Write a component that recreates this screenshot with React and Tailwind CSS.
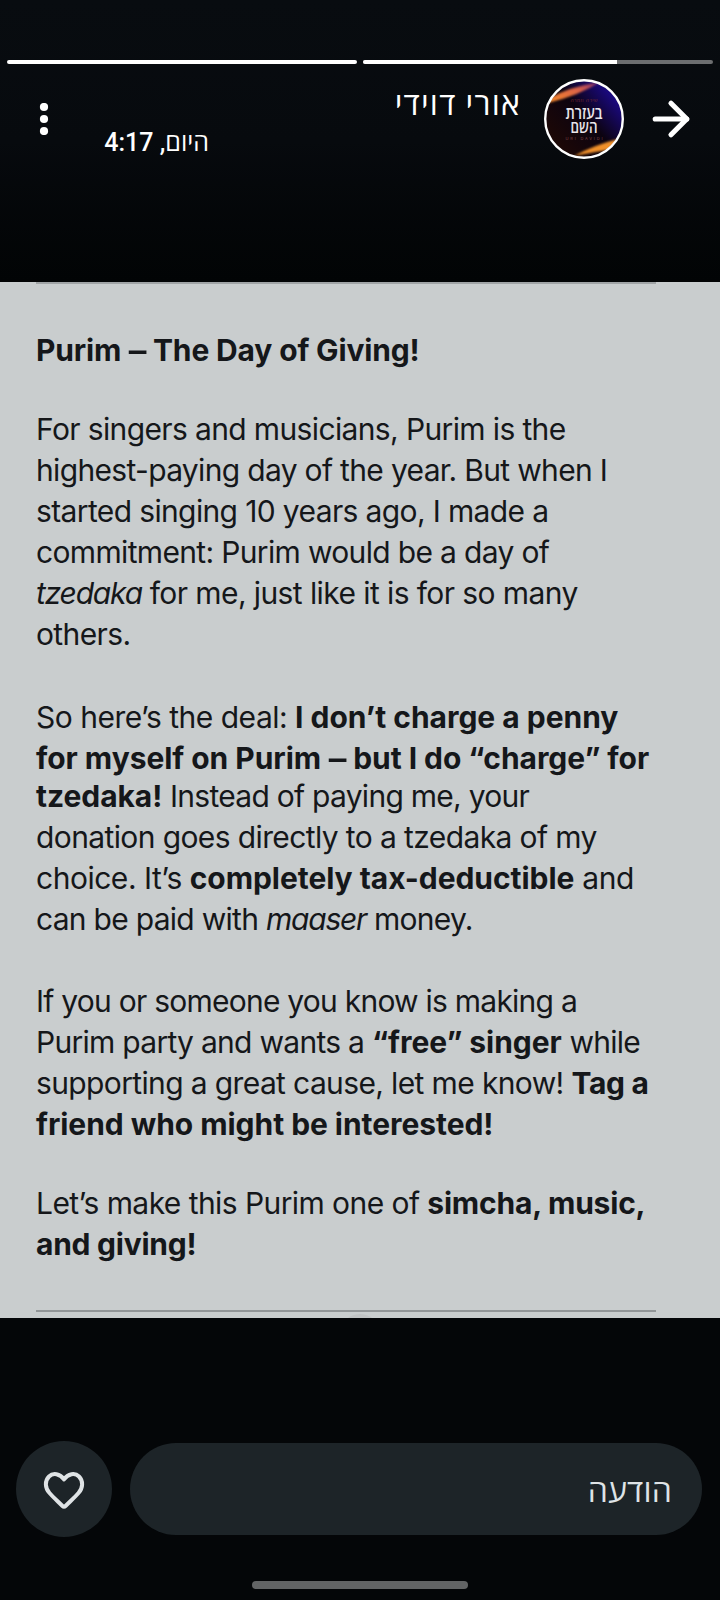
import { ArrowRight } from 'lucide-react'

const B = ({ children, className = 'tracking-[-0.05px]' }) => (
  <strong className={`font-bold ${className}`}>{children}</strong>
)

const Em = ({ children }) => <em className="tracking-[-1.2px]">{children}</em>

const Dash = () => <span className="mx-[1.5px] inline-block scale-x-[1.18]">–</span>

function Line({ className = '', children }) {
  return <span className={`block h-[41px] whitespace-nowrap ${className}`}>{children}</span>
}

function Progress() {
  return (
    <div className="flex gap-[6px] px-[7px] pt-[60px]">
      <div className="h-1 flex-1 rounded-full bg-white" />
      <div className="h-1 flex-1 overflow-hidden rounded-full bg-[#6c6e70]">
        <div className="h-full w-[254px] bg-white" />
      </div>
    </div>
  )
}

function Avatar() {
  return (
    <svg className="block h-20 w-20" viewBox="0 0 80 80">
      <defs>
        <clipPath id="disc"><circle cx="40" cy="40" r="38" /></clipPath>
        <linearGradient id="sky" x1="0.15" y1="0.8" x2="0.9" y2="0.15">
          <stop offset="0" stopColor="#1c0806" />
          <stop offset="0.5" stopColor="#0c0310" />
          <stop offset="1" stopColor="#1c0a92" />
        </linearGradient>
        <linearGradient id="flare" x1="0" y1="1" x2="1" y2="0">
          <stop offset="0" stopColor="#f58a25" />
          <stop offset="0.6" stopColor="#dc6248" />
          <stop offset="1" stopColor="#7a2a70" />
        </linearGradient>
        <filter id="glow"><feGaussianBlur stdDeviation="1.2" /></filter>
      </defs>
      <g clipPath="url(#disc)">
        <rect width="80" height="80" fill="url(#sky)" />
        <path d="M4 20 Q24 8 56 3 Q36 16 4 24Z" fill="url(#flare)" filter="url(#glow)" />
        <path d="M30 77 Q50 66 74 60 L70 70 Q50 73 30 77Z" fill="#f0902c" filter="url(#glow)" />
        <text x="40" y="23" textAnchor="middle" fontSize="5" textLength="27" className="font-['Open_Sans']" fill="#7a2a35">שירה וזמרה</text>
        <text textAnchor="middle" fontSize="17" className="font-['Open_Sans'] font-semibold" fill="#e8e4ea">
          <tspan x="40" y="39.500" textLength="37" lengthAdjust="spacingAndGlyphs">בעזרת</tspan>
          <tspan x="40" y="53.500" textLength="27" lengthAdjust="spacingAndGlyphs">השם</tspan>
        </text>
        <text x="40" y="61" textAnchor="middle" fontSize="4" textLength="37" className="font-['Inter']" fill="#80444a">URI DAVIDI</text>
      </g>
      <circle cx="40" cy="40" r="38.8" fill="none" stroke="#fff" strokeWidth="2.4" />
    </svg>
  )
}

function Header() {
  return (
    <header className="flex h-[112px] pt-[15px] text-white font-[Roboto,'Open_Sans',sans-serif]">
      <svg className="mt-[24px] ml-[39px] h-8 w-[10px]" viewBox="0 0 10 32" fill="currentColor">
        <circle cx="5" cy="4" r="4.1" />
        <circle cx="5" cy="16" r="4.1" />
        <circle cx="5" cy="28" r="4.1" />
      </svg>
      <p dir="rtl" className="mt-[48px] ml-[56px] w-[104px] text-[25px] leading-[32px] font-medium whitespace-nowrap">היום, 4:17</p>
      <p dir="rtl" className="mt-[5px] ml-auto text-[32px] leading-[40px] tracking-[1.2px] whitespace-nowrap">אורי דוידי</p>
      <div className="ml-[23px]"><Avatar /></div>
      <ArrowRight className="mt-[13px] mr-[22px] ml-[20px] h-[54px] w-[54px]" strokeWidth={2.3} />
    </header>
  )
}

function Post() {
  return (
    <article className="relative h-[1036px] overflow-hidden bg-[#c9cdce] pl-[36px] text-[30px] leading-[41px] tracking-[-0.63px] text-[#15171a] font-[Inter,sans-serif]">
      <div className="h-[2px] w-[620px] bg-[#a0a4a6]" />
      <p className="mt-[46px]">
        <Line><B className="tracking-[-0.16px]">Purim <Dash /> The Day of Giving!</B></Line>
      </p>
      <p className="mt-[38px]">
        <Line>For singers and musicians, Purim is the</Line>
        <Line className="tracking-[-0.67px]">highest-paying day of the year. But when I</Line>
        <Line>started singing 10 years ago, I made a</Line>
        <Line className="tracking-[-0.66px]">commitment: Purim would be a day of</Line>
        <Line className="tracking-[-0.59px]"><Em>tzedaka</Em> for me, just like it is for so many</Line>
        <Line>others.</Line>
      </p>
      <p className="mt-[42px]">
        <Line className="tracking-[-0.5px]">So here’s the deal: <B className="tracking-[-0.02px]">I don’t charge a penny</B></Line>
        <Line className="-mb-[3px]"><B>for myself on Purim <Dash /> but I do “charge” for</B></Line>
        <Line className="tracking-[-0.73px]"><B>tzedaka!</B> Instead of paying me, your</Line>
        <Line className="tracking-[-0.61px]">donation goes directly to a tzedaka of my</Line>
        <Line className="tracking-[-0.48px]">choice. It’s <B>completely tax-deductible</B> and</Line>
        <Line className="tracking-[-0.72px]">can be paid with <Em>maaser</Em> money.</Line>
      </p>
      <p className="mt-[41px]">
        <Line className="tracking-[-0.76px]">If you or someone you know is making a</Line>
        <Line className="tracking-[-0.72px]">Purim party and wants a <B>“free” singer</B> while</Line>
        <Line>supporting a great cause, let me know! <B className="tracking-[-0.3px]">Tag a</B></Line>
        <Line><B>friend who might be interested!</B></Line>
      </p>
      <p className="mt-[38px]">
        <Line className="tracking-[-0.57px]">Let’s make this Purim one of <B className="tracking-[-0.2px]">simcha, music,</B></Line>
        <Line><B className="tracking-[-0.25px]">and giving!</B></Line>
      </p>
      <div className="absolute bottom-[6px] left-[36px] h-[2px] w-[620px] bg-[#929698]" />
      <div className="absolute -bottom-[36px] left-[340px] h-[40px] w-[40px] rounded-full bg-[#c0c3c4]" />
    </article>
  )
}

function ReplyBar() {
  return (
    <footer className="flex items-center pt-[123px] pl-4">
      <button className="flex h-24 w-24 items-center justify-center rounded-full bg-[#1d2428]">
        <svg className="mt-[4px] h-[48px] w-[48px]" viewBox="0 0 48 48" fill="none" stroke="#dfe3e5" strokeWidth="4" strokeLinejoin="round">
          <path d="M24 12.5 C20 6.5 13 5.5 9 9.5 C4.500 14 5 21 9.500 26 C13 30 18 34.500 22.500 39 Q24 40.500 25.500 39 C30 34.500 35 30 38.500 26 C43 21 43.500 14 39 9.500 C35 5.500 28 6.500 24 12.500Z" />
        </svg>
      </button>
      <div dir="rtl" className="ml-[18px] flex h-[92px] w-[572px] items-center rounded-full bg-[#1d2428] px-[30px] pt-[2px] text-[32px] tracking-[0.2px] text-[#dfe3e6] font-['Open_Sans',sans-serif]">
        הודעה
      </div>
    </footer>
  )
}

export default function App() {
  return (
    <div className="flex h-[1600px] w-[720px] flex-col overflow-hidden bg-[#040608]">
      <div className="h-[282px] bg-linear-to-b from-[#080c10] via-[#070a0e] to-[#020405]">
        <Progress />
        <Header />
      </div>
      <Post />
      <ReplyBar />
      <div className="mt-auto mb-[11px] ml-[252px] h-2 w-[216px] rounded-full bg-[#626465]" />
    </div>
  )
}
